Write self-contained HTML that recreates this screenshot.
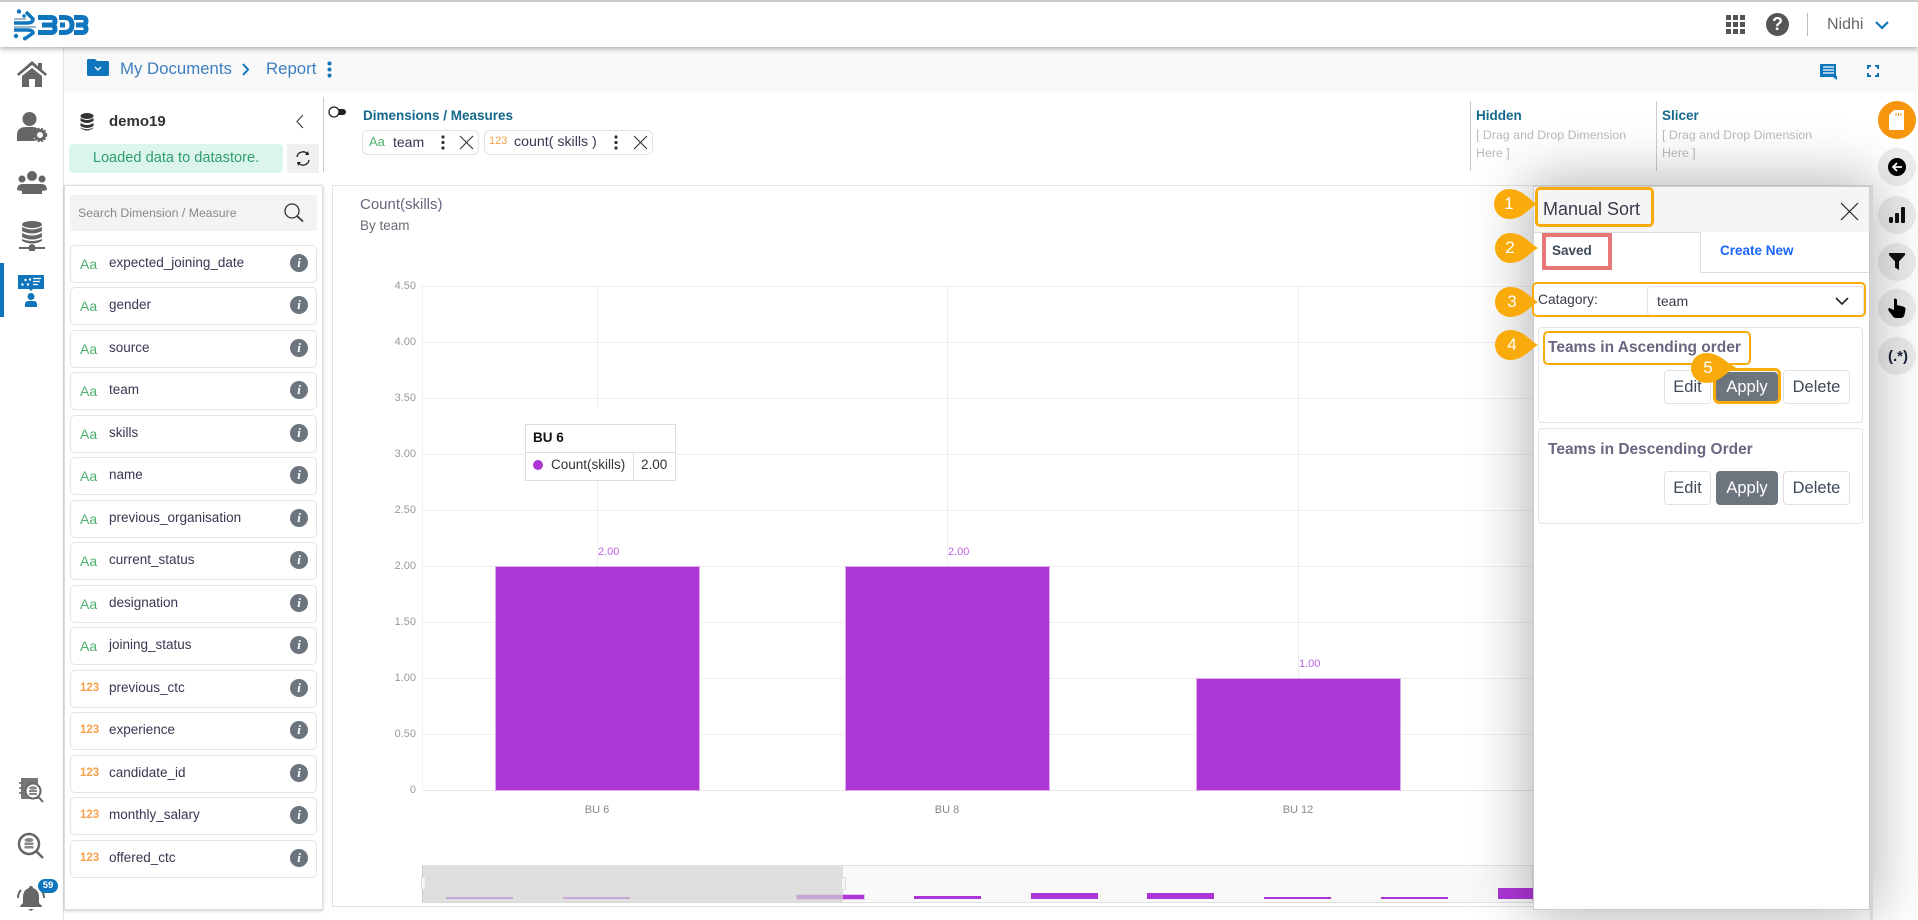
<!DOCTYPE html>
<html><head><meta charset="utf-8"><title>Manual Sort</title>
<style>
*{box-sizing:border-box}
html,body{margin:0;padding:0;width:1918px;height:920px;overflow:hidden;background:#fff;font-family:"Liberation Sans",sans-serif;color:#333}
.a{position:absolute}
.t{position:absolute;white-space:nowrap;line-height:1}
svg{position:absolute;overflow:visible}
.row{position:absolute;left:70px;width:247px;height:38px;border:1px solid #e2e2e8;border-radius:5px;background:#fff}
.row b{position:absolute;left:9px;top:10px;font-weight:400;font-size:14px;line-height:16px;color:#4caf6d}
.row b.n{color:#f7a04b;font-size:11.500px;font-weight:700;left:9px;top:9px}
.row span{position:absolute;left:38px;top:9px;font-size:13.500px;line-height:16px;color:#3a3550;white-space:nowrap}
.row i{position:absolute;left:219px;top:8px;width:18px;height:18px;border-radius:50%;background:#6c757d;color:#fff;font:italic bold 13px/18px "Liberation Serif",serif;text-align:center}
.yl{position:absolute;width:40px;left:376px;text-align:right;font-size:11px;line-height:12px;color:#999}
.h{position:absolute;left:423px;width:1110px;height:1px;background:#efefef}
.v{position:absolute;top:286px;height:504px;width:1px;background:#efefef}
.bar{position:absolute;background:#ad36d6;outline:1px solid #dfa8f0}
.vl{position:absolute;font-size:11px;line-height:12px;color:#c060e0}
.xl{position:absolute;width:80px;text-align:center;font-size:11px;line-height:12px;color:#888;top:804px}
.m{position:absolute;width:67px;bottom:21px;background:#ad36d6;outline:1px solid #e3c4ee}
.rc{position:absolute;left:1878px;width:38px;height:38px;border-radius:50%;background:#ececec}
.btn{position:absolute;height:34px;border:1px solid #e0e0e6;border-radius:4px;background:#fff;font-size:16.500px;line-height:32px;text-align:center;color:#3d4a57}
.btn.ap{background:#6c757d;color:#fff;border-color:#6c757d}
.card{position:absolute;left:1538px;width:325px;height:96px;border:1px solid #e2e2e8;border-radius:4px;background:#fff}
.ct{position:absolute;left:1548px;font-weight:700;font-size:15.500px;line-height:18px;color:#6b6580;white-space:nowrap}
.ob{position:absolute;border:3px solid #f9ab0c;border-radius:5px}
.num{position:absolute;color:#fff;font-size:17px;line-height:20px;width:20px;text-align:center}
</style></head><body>

<!-- top bar -->
<div class="a" style="left:0;top:0;width:1918px;height:2px;background:#d0d0d0"></div>
<div class="a" style="left:0;top:2px;width:1918px;height:45px;background:#fff;box-shadow:0 2px 5px rgba(0,0,0,.3);z-index:5"></div>

<!-- logo -->
<svg style="left:14px;top:9px;z-index:6" width="74" height="32" viewBox="0 0 74 32" fill="none" stroke="#0f75bc" stroke-width="5">
<path d="M24 8.500H37Q41 8.500 41 12 41 16 37 16H28M37 16Q41 16 41 20 41 23.500 37 23.500H24"/>
<path d="M45 8.500H50Q58 8.500 58 16 58 23.500 50 23.500H45M46 16H51"/>
<path d="M60 8.500H68Q72 8.500 72 12 72 16 68 16H62M68 16Q72 16 72 20 72 23.500 68 23.500H60"/>
<path d="M0 14H13Q19 14 19 10L12 3M0 21H13Q19 21 19 24L12 29" stroke-width="3.500"/>
<path d="M0 10H12M0 18H22" stroke="#9fb9cc" stroke-width="2"/>
<circle cx="5" cy="2.500" r="2.200" fill="#0f75bc" stroke="none"/><circle cx="10" cy="7" r="1.800" fill="#0f75bc" stroke="none"/><circle cx="2" cy="27" r="2.200" fill="#0f75bc" stroke="none"/><circle cx="11" cy="29.500" r="2" fill="#0f75bc" stroke="none"/>
</svg>

<!-- top right -->
<svg style="left:1726px;top:15px;z-index:6" width="19" height="19" fill="#555"><rect width="5" height="5"/><rect x="7" width="5" height="5"/><rect x="14" width="5" height="5"/><rect y="7" width="5" height="5"/><rect x="7" y="7" width="5" height="5"/><rect x="14" y="7" width="5" height="5"/><rect y="14" width="5" height="5"/><rect x="7" y="14" width="5" height="5"/><rect x="14" y="14" width="5" height="5"/></svg>
<div class="a" style="left:1766px;top:13px;width:23px;height:23px;border-radius:50%;background:#555;color:#fff;font:700 18px/23px 'Liberation Sans',sans-serif;text-align:center;z-index:6">?</div>
<div class="a" style="left:1807px;top:13px;width:1px;height:23px;background:#bbb;z-index:6"></div>
<div class="t" style="left:1827px;top:17px;font-size:16px;color:#666;z-index:6">Nidhi</div>
<svg style="left:1875px;top:21px;z-index:6" width="14" height="9" fill="none" stroke="#0f75bc" stroke-width="2.200"><path d="M1 1l6 6 6-6"/></svg>

<!-- sidebar -->
<div class="a" style="left:63px;top:47px;width:1px;height:873px;background:#e4e4e4"></div>
<div class="a" style="left:0;top:263px;width:4px;height:54px;background:#0f75bc"></div>
<svg style="left:17px;top:61px" width="30" height="26" viewBox="0 0 30 26" fill="#666"><path d="M15 0L0 13l1.500 2L15 4l13.500 11 1.500-2-5-4.300V2h-4v3.200z"/><path d="M5 15L15 7l10 8v11h-7v-8h-6v8H5z"/></svg>
<svg style="left:17px;top:112px" width="30" height="30" viewBox="0 0 30 30" fill="#666"><circle cx="12.500" cy="7" r="7"/><path d="M0 29v-6q0-8 9-8h7q3 0 5 2-6 5-3 12z"/><circle cx="23" cy="23" r="4.500" fill="none" stroke="#666" stroke-width="3"/><circle cx="23" cy="23" r="6.500" fill="none" stroke="#666" stroke-width="1.500" stroke-dasharray="2 1.500"/></svg>
<svg style="left:17px;top:171px" width="30" height="24" viewBox="0 0 30 24" fill="#666"><circle cx="15" cy="5" r="5"/><circle cx="5" cy="8" r="3.500"/><circle cx="25" cy="8" r="3.500"/><path d="M0 19q0-6 6-6h18q6 0 6 6l-5 1v3H5v-3z"/></svg>
<svg style="left:18px;top:221px" width="28" height="30" viewBox="0 0 28 30" fill="#666"><ellipse cx="14" cy="3.500" rx="10" ry="3.500"/><path d="M4 6q10 5 20 0v4q-10 5-20 0zM4 12q10 5 20 0v4q-10 5-20 0zM4 18q10 4 20 0v2q-10 5-20 0z"/><path d="M14 23v2M1 27h10M17 27h10" stroke="#666" stroke-width="2"/><rect x="11" y="24" width="6" height="6"/></svg>
<svg style="left:18px;top:275px" width="26" height="32" viewBox="0 0 26 32"><path d="M0 0h26v14H15l-2 2-2-2H0z" fill="#0f75bc"/><circle cx="4.500" cy="9.500" r="1.200" fill="#fff"/><circle cx="7.500" cy="5" r="1.200" fill="#fff"/><circle cx="10" cy="9.500" r="1.200" fill="#fff"/><circle cx="12" cy="4.500" r="1.200" fill="#fff"/><path d="M15 3.500h8M15 6.500h7M15 9.500h5" stroke="#fff" stroke-width="1.200"/><circle cx="13" cy="21.500" r="3.500" fill="#0f75bc"/><path d="M7 32v-2q0-4 3-4h6q3 0 3 4v2z" fill="#0f75bc"/></svg>
<svg style="left:18px;top:777px" width="26" height="27" viewBox="0 0 26 27" fill="none" stroke="#666"><rect x="3" y="1" width="17" height="21" fill="#777" stroke="none"/><path d="M1 6h4M1 11h4M1 16h4" stroke-width="1.500"/><circle cx="15" cy="14" r="7.500" fill="#fff" stroke-width="2"/><path d="M20.500 20l4.500 5" stroke-width="2"/><ellipse cx="15" cy="11" rx="4" ry="1.800" fill="#888" stroke="none"/><rect x="11" y="13" width="8" height="2" fill="#888" stroke="none"/><rect x="11" y="16" width="8" height="2" fill="#888" stroke="none"/></svg>
<svg style="left:17px;top:832px" width="28" height="27" viewBox="0 0 28 27" fill="none" stroke="#666"><circle cx="12" cy="12" r="10" stroke-width="2.500"/><path d="M19 19l7 7" stroke-width="2.500"/><ellipse cx="12" cy="8" rx="4.500" ry="2" fill="#888" stroke="none"/><rect x="7.500" y="10.500" width="9" height="2.500" fill="#888" stroke="none"/><rect x="7.500" y="14" width="9" height="2.500" fill="#888" stroke="none"/></svg>
<svg style="left:17px;top:885px" width="28" height="27" viewBox="0 0 28 27" fill="#666"><path d="M14 1q2 0 2 2 6 2 6 9v6l3 3v1H3v-1l3-3v-6q0-7 6-9 0-2 2-2z"/><path d="M11 24h6l-3 2z"/><path d="M4 5Q1 8 1 13M24 5q3 3 3 8" fill="none" stroke="#666" stroke-width="2"/></svg>
<div class="a" style="left:38px;top:879px;width:20px;height:14px;border-radius:7px;background:#0f75bc;color:#fff;font-size:9.500px;font-weight:700;line-height:14px;text-align:center">59</div>

<!-- breadcrumb -->
<div class="a" style="left:64px;top:47px;width:1854px;height:45px;background:#f9f9f9"></div>
<svg style="left:87px;top:59px" width="22" height="17" viewBox="0 0 22 17"><path d="M1.500 0H8l2 2h10.500Q22 2 22 3.500v12q0 1.500-1.500 1.500h-19Q0 17 0 15.500v-14Q0 0 1.500 0z" fill="#0f75bc"/><path d="M8 8l3 3 3-3" stroke="#fff" fill="none" stroke-width="1.300"/></svg>
<div class="t" style="left:120px;top:61px;font-size:16.800px;color:#3d7fc0">My Documents</div>
<svg style="left:242px;top:63px" width="8" height="13" fill="none" stroke="#0f75bc" stroke-width="2"><path d="M1 1l5 5.500L1 12"/></svg>
<div class="t" style="left:266px;top:61px;font-size:16.800px;color:#3d7fc0">Report</div>
<svg style="left:327px;top:61px" width="5" height="17" fill="#0f75bc"><circle cx="2.500" cy="2.500" r="2"/><circle cx="2.500" cy="8.500" r="2"/><circle cx="2.500" cy="14.500" r="2"/></svg>
<svg style="left:1820px;top:64px" width="17" height="16" viewBox="0 0 17 16" fill="#0f75bc"><path d="M0 0h16v12h1v4l-4-3H0z"/><path d="M3 3h11M3 6h11M3 9h11" stroke="#fff" stroke-width="1.200"/></svg>
<svg style="left:1867px;top:65px" width="12" height="12" fill="none" stroke="#0f75bc" stroke-width="2"><path d="M1 4V1h3M8 1h3v3M11 8v3H8M4 11H1V8"/></svg>

<!-- dataset header -->
<svg style="left:80px;top:113px" width="14" height="18" viewBox="0 0 14 18" fill="#333"><ellipse cx="7" cy="3" rx="6.500" ry="3"/><path d="M.5 5q6.500 4 13 0v3q-6.500 4-13 0zM.5 10q6.500 4 13 0v3q-6.500 4-13 0z"/><path d="M.5 14.500q6.500 3.500 13 0v.5q-6.500 5-13 0z"/></svg>
<div class="t" style="left:109px;top:114px;font-size:15px;font-weight:700;color:#333">demo19</div>
<svg style="left:295px;top:114px" width="10" height="15" fill="none" stroke="#444" stroke-width="1.200"><path d="M8 1L2 7.500 8 14"/></svg>
<div class="a" style="left:69px;top:144px;width:214px;height:29px;border-radius:4px;background:#dcf5ec;color:#2f9e6e;font-size:14.600px;line-height:29px;text-align:center">Loaded data to datastore.</div>
<div class="a" style="left:287px;top:144px;width:32px;height:29px;background:#f0f0f0"></div>
<svg style="left:295px;top:150px" width="16" height="17" viewBox="0 0 16 17" fill="none" stroke="#222" stroke-width="1.300"><path d="M2 7a6 6 0 0 1 10.500-3M14 10a6 6 0 0 1-10.500 3"/><path d="M10 5l4 0-1-4z" fill="#222" stroke="none"/><path d="M6 12l-4 0 1 4z" fill="#222" stroke="none"/></svg>
<div class="a" style="left:323px;top:97px;width:1px;height:75px;background:#ccc"></div>
<svg style="left:328px;top:106px" width="18" height="12" viewBox="0 0 18 12"><rect x="3" y="3" width="15" height="6" rx="3" fill="#222"/><circle cx="6" cy="6" r="5" fill="#fff" stroke="#222" stroke-width="1.300"/></svg>
<div class="t" style="left:363px;top:109px;font-size:13.500px;font-weight:700;color:#14688c">Dimensions / Measures</div>

<div class="a" style="left:362px;top:130px;width:117px;height:25px;border:1px solid #e2e2e8;border-radius:6px"></div>
<div class="t" style="left:369px;top:135px;font-size:13px;color:#4caf6d">Aa</div>
<div class="t" style="left:393px;top:135px;font-size:14px;color:#3a3550">team</div>
<svg style="left:441px;top:135px" width="4" height="15" fill="#333"><circle cx="2" cy="2" r="1.600"/><circle cx="2" cy="7.500" r="1.600"/><circle cx="2" cy="13" r="1.600"/></svg>
<svg style="left:460px;top:136px" width="13" height="13" stroke="#333" stroke-width="1.100"><path d="M0 0l13 13M13 0L0 13"/></svg>
<div class="a" style="left:484px;top:130px;width:169px;height:25px;border:1px solid #e2e2e8;border-radius:6px"></div>
<div class="t" style="left:489px;top:136px;font-size:11px;color:#f7a04b">123</div>
<div class="t" style="left:514px;top:135px;font-size:14.200px;color:#3a3550">count( skills )</div>
<svg style="left:614px;top:135px" width="4" height="15" fill="#333"><circle cx="2" cy="2" r="1.600"/><circle cx="2" cy="7.500" r="1.600"/><circle cx="2" cy="13" r="1.600"/></svg>
<svg style="left:634px;top:136px" width="13" height="13" stroke="#333" stroke-width="1.100"><path d="M0 0l13 13M13 0L0 13"/></svg>

<div class="a" style="left:1470px;top:101px;width:1px;height:70px;background:#ccc"></div>
<div class="t" style="left:1476px;top:109px;font-size:13.500px;font-weight:700;color:#14688c">Hidden</div>
<div class="t" style="left:1476px;top:129px;font-size:12.400px;color:#bbb">[ Drag and Drop Dimension</div>
<div class="t" style="left:1476px;top:147px;font-size:12.400px;color:#bbb">Here ]</div>
<div class="a" style="left:1656px;top:101px;width:1px;height:70px;background:#ccc"></div>
<div class="t" style="left:1662px;top:109px;font-size:13.500px;font-weight:700;color:#14688c">Slicer</div>
<div class="t" style="left:1662px;top:129px;font-size:12.400px;color:#bbb">[ Drag and Drop Dimension</div>
<div class="t" style="left:1662px;top:147px;font-size:12.400px;color:#bbb">Here ]</div>

<!-- field list -->
<div class="a" style="left:64px;top:185px;width:259px;height:725px;background:#fff;border:1px solid #ddd;box-shadow:0 1px 3px rgba(0,0,0,.2)"></div>
<div class="a" style="left:70px;top:195px;width:247px;height:36px;background:#f3f3f3"></div>
<div class="t" style="left:78px;top:207px;font-size:12.300px;color:#888">Search Dimension / Measure</div>
<svg style="left:284px;top:203px" width="20" height="19" fill="none" stroke="#333" stroke-width="1.300"><circle cx="8" cy="8" r="7"/><path d="M13 13l6 5.500" stroke-width="1.800"/></svg>

<div class="row" style="top:245px"><b>Aa</b><span>expected_joining_date</span><i>i</i></div>
<div class="row" style="top:287px"><b>Aa</b><span>gender</span><i>i</i></div>
<div class="row" style="top:330px"><b>Aa</b><span>source</span><i>i</i></div>
<div class="row" style="top:372px"><b>Aa</b><span>team</span><i>i</i></div>
<div class="row" style="top:415px"><b>Aa</b><span>skills</span><i>i</i></div>
<div class="row" style="top:457px"><b>Aa</b><span>name</span><i>i</i></div>
<div class="row" style="top:500px"><b>Aa</b><span>previous_organisation</span><i>i</i></div>
<div class="row" style="top:542px"><b>Aa</b><span>current_status</span><i>i</i></div>
<div class="row" style="top:585px"><b>Aa</b><span>designation</span><i>i</i></div>
<div class="row" style="top:627px"><b>Aa</b><span>joining_status</span><i>i</i></div>
<div class="row" style="top:670px"><b class="n">123</b><span>previous_ctc</span><i>i</i></div>
<div class="row" style="top:712px"><b class="n">123</b><span>experience</span><i>i</i></div>
<div class="row" style="top:755px"><b class="n">123</b><span>candidate_id</span><i>i</i></div>
<div class="row" style="top:797px"><b class="n">123</b><span>monthly_salary</span><i>i</i></div>
<div class="row" style="top:840px"><b class="n">123</b><span>offered_ctc</span><i>i</i></div>

<!-- chart panel -->
<div class="a" style="left:332px;top:185px;width:1560px;height:722px;background:#fff;border:1px solid #e2e2e2"></div>
<div class="a" style="left:0;top:908px;width:1918px;height:12px;background:linear-gradient(#f4f4f4,#fcfcfc);z-index:-1"></div>
<div class="t" style="left:360px;top:197px;font-size:15px;color:#6b6580">Count(skills)</div>
<div class="t" style="left:360px;top:219px;font-size:13.500px;color:#6b6b75">By team</div>

<div class="h" style="top:286px"></div><div class="h" style="top:342px"></div><div class="h" style="top:398px"></div><div class="h" style="top:454px"></div><div class="h" style="top:510px"></div><div class="h" style="top:566px"></div><div class="h" style="top:622px"></div><div class="h" style="top:678px"></div><div class="h" style="top:734px"></div><div class="h" style="top:790px;background:#e6e6e6"></div>
<div class="v" style="left:422px"></div><div class="v" style="left:597px"></div><div class="v" style="left:947px"></div><div class="v" style="left:1298px"></div>
<div class="a" style="left:595px;top:407px;width:5px;height:17px;background:#fff"></div>
<div class="yl" style="top:280px">4.50</div><div class="yl" style="top:336px">4.00</div><div class="yl" style="top:392px">3.50</div><div class="yl" style="top:448px">3.00</div><div class="yl" style="top:504px">2.50</div><div class="yl" style="top:560px">2.00</div><div class="yl" style="top:616px">1.50</div><div class="yl" style="top:672px">1.00</div><div class="yl" style="top:728px">0.50</div><div class="yl" style="top:784px">0</div>

<div class="bar" style="left:496px;top:567px;width:203px;height:223px"></div>
<div class="bar" style="left:846px;top:567px;width:203px;height:223px"></div>
<div class="bar" style="left:1197px;top:679px;width:203px;height:111px"></div>
<div class="vl" style="left:598px;top:546px">2.00</div><div class="vl" style="left:948px;top:546px">2.00</div><div class="vl" style="left:1299px;top:658px">1.00</div>
<div class="xl" style="left:557px">BU 6</div><div class="xl" style="left:907px">BU 8</div><div class="xl" style="left:1258px">BU 12</div>

<!-- tooltip -->
<div class="a" style="left:525px;top:424px;width:151px;height:57px;background:#fff;border:1px solid #ddd"></div>
<div class="a" style="left:526px;top:452px;width:149px;height:1px;background:#ddd"></div>
<div class="a" style="left:633px;top:453px;width:1px;height:27px;background:#ddd"></div>
<div class="t" style="left:533px;top:431px;font-size:13.500px;font-weight:700;color:#111">BU 6</div>
<div class="a" style="left:533px;top:460px;width:10px;height:10px;border-radius:50%;background:#ad36d6"></div>
<div class="t" style="left:551px;top:458px;font-size:13.500px;color:#333">Count(skills)</div>
<div class="t" style="left:641px;top:458px;font-size:13.500px;color:#333">2.00</div>

<!-- brush -->
<div class="a" style="left:422px;top:865px;width:1111px;height:38px;background:#f9f9f9;border:1px solid #e0e0e0;border-left:1px solid #ccc"></div>
<div class="m" style="left:797px;height:4px;bottom:21px"></div><div class="a" style="left:914px;top:896px;width:67px;height:3px;background:#ad36d6"></div>
<div class="a" style="left:1031px;top:893px;width:67px;height:6px;background:#ad36d6"></div>
<div class="a" style="left:1147px;top:893px;width:67px;height:6px;background:#ad36d6"></div>
<div class="a" style="left:1264px;top:897px;width:67px;height:2px;background:#ad36d6"></div>
<div class="a" style="left:1381px;top:897px;width:67px;height:2px;background:#ad36d6"></div>
<div class="a" style="left:1498px;top:888px;width:35px;height:11px;background:#ad36d6"></div>
<div class="a" style="left:446px;top:897px;width:67px;height:2px;background:#ad36d6"></div>
<div class="a" style="left:563px;top:897px;width:67px;height:2px;background:#ad36d6"></div>
<div class="a" style="left:423px;top:866px;width:420px;height:37px;background:rgba(212,212,212,.7)"></div>
<div class="a" style="left:421px;top:877px;width:5px;height:13px;background:#f6f6f6;border:1px solid #ddd"></div>
<div class="a" style="left:841px;top:877px;width:5px;height:13px;background:#f6f6f6;border:1px solid #ddd"></div>

<!-- right rail -->
<div class="a" style="left:1873px;top:92px;width:45px;height:828px;background:#fff"></div>
<div class="rc" style="top:101px;background:#f8950f"></div>
<svg style="left:1889px;top:110px" width="15" height="20" viewBox="0 0 15 20" fill="#fff"><path d="M5 0h10v20H0V5z"/><path d="M7 3v3M9.500 3v3M12 3v3" stroke="#f8950f" stroke-width="1"/></svg>
<div class="rc" style="top:148px"></div>
<svg style="left:1888px;top:158px" width="18" height="18" viewBox="0 0 18 18"><circle cx="9" cy="9" r="9" fill="#000"/><path d="M14 9H5M9 5L5 9l4 4" stroke="#fff" stroke-width="1.800" fill="none"/></svg>
<div class="rc" style="top:196px"></div>
<svg style="left:1889px;top:207px" width="16" height="16" fill="#111"><rect y="10" width="4" height="6" rx="1.500"/><rect x="6" y="6" width="4" height="10" rx="1"/><rect x="12" width="4" height="16" rx="1"/></svg>
<div class="rc" style="top:243px"></div>
<svg style="left:1889px;top:253px" width="16" height="17" fill="#111"><path d="M0 0h16v2L10 8.500V17l-4-2.500V8.500L0 2z"/></svg>
<div class="rc" style="top:289px"></div>
<svg style="left:1888px;top:298px" width="18" height="20" viewBox="0 0 18 20" fill="#000"><path d="M6 1q2-1.500 3 1v5l6 1.500q2.500 .5 2.500 3l-1 5q-.5 3.500-4 3.500H8q-2 0-3-1.500L.5 12.500q-1-2 1-2.500L6 12z"/></svg>
<div class="rc" style="top:337px"></div>
<div class="t" style="left:1888px;top:349px;font-size:15px;font-weight:700;color:#1a2238">(.*)</div>

<!-- Sort panel -->
<div class="a" style="left:1533px;top:186px;width:337px;height:724px;background:#fff;border:1px solid #ccc;box-shadow:0 0 55px 5px rgba(0,0,0,.3);z-index:1"></div>
<div class="a" style="left:1870px;top:186px;width:3px;height:734px;background:#d4d4d4;z-index:1"></div>
<div style="position:absolute;left:0;top:0;z-index:2;width:1918px;height:920px">
<div class="a" style="left:1534px;top:187px;width:335px;height:45px;background:#f5f5f5"></div>
<div class="t" style="left:1543px;top:200px;font-size:18px;color:#3a3a4a">Manual Sort</div>
<div class="ob" style="left:1535px;top:187px;width:119px;height:40px"></div>
<svg style="left:1841px;top:203px" width="17" height="17" stroke="#222" stroke-width="1.200"><path d="M0 0l17 17M17 0L0 17"/></svg>
<div class="a" style="left:1534px;top:232px;width:167px;height:1px;background:#ddd"></div>
<div class="a" style="left:1700px;top:232px;width:1px;height:41px;background:#ddd"></div>
<div class="a" style="left:1700px;top:272px;width:169px;height:1px;background:#ddd"></div>
<div class="a" style="left:1542px;top:233px;width:70px;height:37px;border:4px solid #e87878"></div>
<div class="t" style="left:1552px;top:244px;font-size:13.500px;font-weight:700;color:#3d4a57">Saved</div>
<div class="t" style="left:1720px;top:244px;font-size:13.500px;font-weight:700;color:#1a66ff">Create New</div>

<div class="a" style="left:1647px;top:286px;width:217px;height:30px;border:1px solid #e2e2e8;border-radius:4px"></div>
<div class="ob" style="left:1532px;top:282px;width:334px;height:35px;border-width:2px"></div>
<div class="t" style="left:1538px;top:293px;font-size:13.800px;color:#3a3a4a">Catagory:</div>
<div class="t" style="left:1657px;top:294px;font-size:14px;color:#3a3a4a">team</div>
<svg style="left:1835px;top:297px" width="14" height="9" fill="none" stroke="#222" stroke-width="1.600"><path d="M1 1l6 6 6-6"/></svg>

<div class="card" style="top:327px"></div>
<div class="ct" style="top:339px">Teams in Ascending order</div>
<div class="ob" style="left:1543px;top:331px;width:208px;height:34px;border-width:2px"></div>
<div class="btn" style="left:1664px;top:370px;width:47px">Edit</div>
<div class="btn ap" style="left:1716px;top:372px;width:62px;height:31px;line-height:29px">Apply</div>
<div class="ob" style="left:1713px;top:368px;width:68px;height:36px;border-radius:6px"></div>
<div class="btn" style="left:1783px;top:370px;width:67px">Delete</div>

<div class="card" style="top:428px"></div>
<div class="ct" style="top:441px">Teams in Descending Order</div>
<div class="btn" style="left:1664px;top:471px;width:47px">Edit</div>
<div class="btn ap" style="left:1716px;top:471px;width:62px">Apply</div>
<div class="btn" style="left:1783px;top:471px;width:67px">Delete</div>

<!-- callouts -->
<svg style="left:1493px;top:188px" width="44" height="32" fill="#f9ab0c"><path d="M44 16C36 12 30 1 16 1A15 15 0 0 0 16 31C30 31 36 20 44 16Z"/></svg><div class="num" style="left:1499px;top:194px">1</div>
<svg style="left:1494px;top:232px" width="44" height="32" fill="#f9ab0c"><path d="M44 16C36 12 30 1 16 1A15 15 0 0 0 16 31C30 31 36 20 44 16Z"/></svg><div class="num" style="left:1500px;top:238px">2</div>
<svg style="left:1494px;top:286px" width="44" height="32" fill="#f9ab0c"><path d="M44 16C36 12 30 1 16 1A15 15 0 0 0 16 31C30 31 36 20 44 16Z"/></svg><div class="num" style="left:1502px;top:292px">3</div>
<svg style="left:1494px;top:329px" width="44" height="32" fill="#f9ab0c"><path d="M44 16C36 12 30 1 16 1A15 15 0 0 0 16 31C30 31 36 20 44 16Z"/></svg><div class="num" style="left:1502px;top:335px">4</div>
<svg style="left:1690px;top:352px" width="46" height="32" fill="#f9ab0c"><path d="M46 15C38 13 31 1 16 1A15 15 0 0 0 16 31C30 31 36 20 46 15Z"/></svg><div class="num" style="left:1698px;top:358px">5</div>
</div>
</body></html>
